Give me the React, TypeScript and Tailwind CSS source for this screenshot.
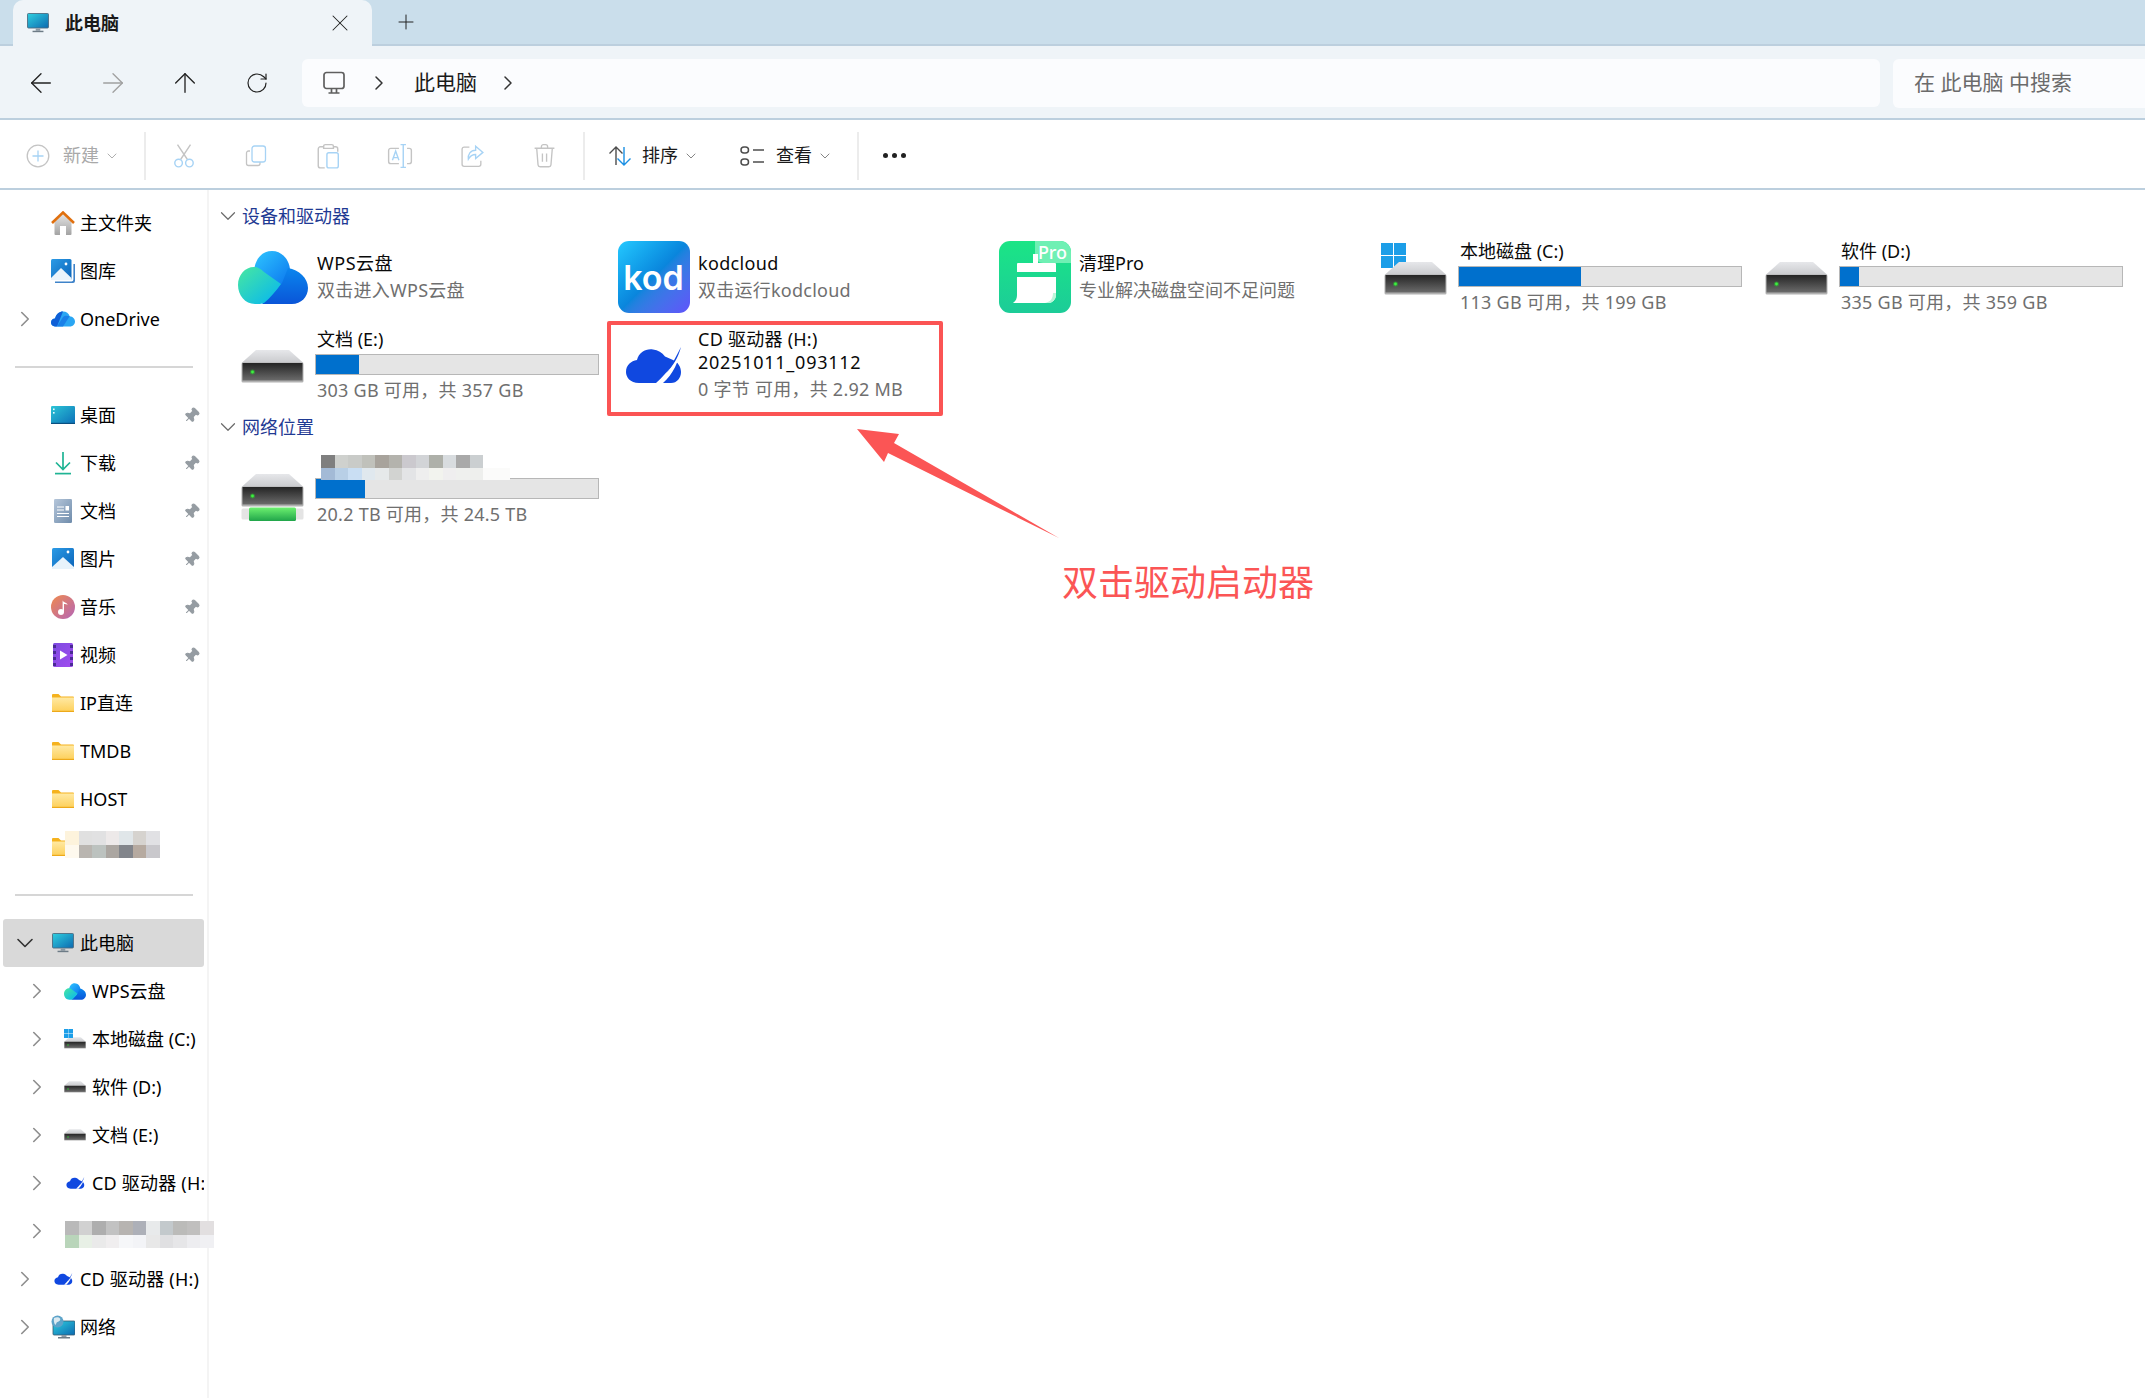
import { ArrowLeft, ArrowRight, ArrowUp, ChevronDown, ChevronRight, Pin, Plus, RotateCw, X } from 'lucide-react';
import type { ReactNode } from 'react';

type IconProps = { className?: string };

function MonitorIcon({ className }: IconProps) {
  return (
    <svg viewBox="0 0 24 22" className={className}>
      <defs>
        <linearGradient id="mon" x1="0" y1="0" x2="1" y2="1">
          <stop offset="0" stopColor="#2fd0e0" />
          <stop offset="1" stopColor="#0c69b0" />
        </linearGradient>
      </defs>
      <rect x="0.5" y="0.5" width="23" height="16" rx="1" fill="url(#mon)" stroke="#4c6b80" />
      <rect x="9.5" y="17" width="5" height="2.5" fill="#8b98a3" />
      <rect x="6" y="19.5" width="12" height="1.6" fill="#6d7b86" />
    </svg>
  );
}

function HomeIcon({ className }: IconProps) {
  return (
    <svg viewBox="0 0 24 24" className={className}>
      <defs>
        <linearGradient id="hm" x1="0" y1="0" x2="0" y2="1">
          <stop offset="0" stopColor="#e4e4e4" />
          <stop offset="1" stopColor="#a3a3a3" />
        </linearGradient>
      </defs>
      <path d="M3.5 11 12 3l8.5 8v12a1 1 0 0 1-1 1h-15a1 1 0 0 1-1-1z" fill="url(#hm)" />
      <rect x="9" y="15" width="6" height="9" fill="#fff" />
      <path d="M1 12 12 1.5 23 12" fill="none" stroke="#e0700f" strokeWidth="2.6" />
    </svg>
  );
}

function PictureIcon({ className, stacked }: IconProps & { stacked?: boolean }) {
  return (
    <svg viewBox="0 0 24 24" className={className}>
      <defs>
        <linearGradient id="pic" x1="0" y1="0" x2="1" y2="1">
          <stop offset="0" stopColor="#2c9be6" />
          <stop offset="1" stopColor="#0a63b8" />
        </linearGradient>
      </defs>
      {stacked && <path d="M4 24h18a2 2 0 0 0 2-2V5h-1.6v15.5a2 2 0 0 1-2 2H4z" fill="#3f83c9" />}
      <rect x={stacked ? 0 : 1} y={stacked ? 0 : 1} width={stacked ? 20.5 : 22} height={21} rx="1.5" fill="url(#pic)" />
      <path d={stacked ? 'M0 19 10 9l10.5 10v2H0z' : 'M1 20 12 10l11 10v2H1z'} fill="#e8f3fb" />
      <circle cx={stacked ? 15 : 17} cy="5" r="1.4" fill="#fff" />
    </svg>
  );
}

function OneDriveIcon({ className }: IconProps) {
  return (
    <svg viewBox="0 0 24 16" className={className}>
      <path d="M4 15.5C1.5 15.5 0 13.6 0 11.6 0 9.2 2 7.6 4 7.6 5.2 3 8.5 0.5 12 0.5c3.4 0 5.7 2 6.7 4.8 3 .2 5.3 2.6 5.3 5.2 0 2.8-2.2 5-5 5z" fill="#2aa6f3" />
      <path d="M4 15.5C1.5 15.5 0 13.6 0 11.6 0 9.2 2 7.6 4 7.6 5.2 3 8.5 0.5 12 0.5L6 15.5z" fill="#0f5fd6" />
      <path d="M6 15.5 12 6c1.4-1.6 4-1.5 6.7-.7L12 15.5z" fill="#1a80e8" />
    </svg>
  );
}

function DesktopIcon({ className }: IconProps) {
  return (
    <svg viewBox="0 0 24 18" className={className}>
      <defs>
        <linearGradient id="dsk" x1="0" y1="0" x2="1" y2="1">
          <stop offset="0" stopColor="#2cc5d6" />
          <stop offset="1" stopColor="#0c6fb8" />
        </linearGradient>
      </defs>
      <rect width="24" height="18" rx="1.2" fill="url(#dsk)" />
      <rect y="16.8" width="24" height="1.2" fill="#0a4f80" />
      <rect x="2" y="2.5" width="1.6" height="1.6" fill="#e8fbff" />
      <rect x="2" y="6" width="1.6" height="1.6" fill="#e8fbff" />
    </svg>
  );
}

function DownloadIcon({ className }: IconProps) {
  return (
    <svg viewBox="0 0 24 24" className={className} fill="none" stroke="#1fb494" strokeWidth="1.7">
      <path d="M12 1v17M5 11.5l7 7 7-7" />
      <path d="M4 22.6h16" />
    </svg>
  );
}

function DocIcon({ className }: IconProps) {
  return (
    <svg viewBox="0 0 20 24" className={className}>
      <defs>
        <linearGradient id="doc" x1="0" y1="0" x2="1" y2="1">
          <stop offset="0" stopColor="#b5c6da" />
          <stop offset="1" stopColor="#6f8cab" />
        </linearGradient>
      </defs>
      <rect x="1" width="18" height="24" rx="1.2" fill="url(#doc)" />
      <path d="M4 8h7M4 11h7M4 14.5h12M4 17.5h12" stroke="#fff" strokeWidth="1" />
      <rect x="12.5" y="7" width="3.5" height="4.5" fill="#fff" />
    </svg>
  );
}

function MusicIcon({ className }: IconProps) {
  return (
    <svg viewBox="0 0 24 24" className={className}>
      <defs>
        <linearGradient id="mus" x1="0" y1="0" x2="1" y2="1">
          <stop offset="0" stopColor="#f08a4d" />
          <stop offset="1" stopColor="#b465b8" />
        </linearGradient>
      </defs>
      <circle cx="12" cy="12" r="12" fill="url(#mus)" />
      <circle cx="10" cy="17" r="3" fill="#fff" />
      <path d="M11.6 17V5.5c1.5 2.4 4.4 2.2 5 4.2-1.6-.8-3-.8-3.6-.6V17z" fill="#fff" />
    </svg>
  );
}

function VideoIcon({ className }: IconProps) {
  return (
    <svg viewBox="0 0 20 24" className={className}>
      <defs>
        <linearGradient id="vid" x1="0" y1="0" x2="1" y2="1">
          <stop offset="0" stopColor="#7c4be0" />
          <stop offset="1" stopColor="#a24cef" />
        </linearGradient>
      </defs>
      <rect width="20" height="24" rx="1.5" fill="url(#vid)" />
      <path d="M0 2h3v3H0zM0 8h3v3H0zM0 14h3v3H0zM0 20h3v3H0zM17 2h3v3h-3zM17 8h3v3h-3zM17 14h3v3h-3zM17 20h3v3h-3z" fill="#4a2a96" />
      <path d="M7 7.5 14.5 12 7 16.5z" fill="#fff" />
    </svg>
  );
}

function FolderIcon({ className }: IconProps) {
  return (
    <svg viewBox="0 0 22 18" className={className}>
      <defs>
        <linearGradient id="fld" x1="0" y1="0" x2="0" y2="1">
          <stop offset="0" stopColor="#ffe9a3" />
          <stop offset="1" stopColor="#fdcf58" />
        </linearGradient>
      </defs>
      <path d="M0 1a1 1 0 0 1 1-1h5.5L9 2.5h12a1 1 0 0 1 1 1V6H0z" fill="#f5b21e" />
      <rect y="3.5" width="22" height="14.5" fill="url(#fld)" />
      <rect y="16.8" width="22" height="1.2" fill="#eda91a" />
    </svg>
  );
}

function WpsCloud({ className }: IconProps) {
  return (
    <svg viewBox="0 0 70 53" className={className}>
      <defs>
        <linearGradient id="wpsA" x1="0" y1="0" x2="1" y2="1">
          <stop offset="0" stopColor="#2fc6ff" />
          <stop offset="1" stopColor="#0a74ee" />
        </linearGradient>
        <linearGradient id="wpsB" x1="0" y1="0" x2="0" y2="1">
          <stop offset="0" stopColor="#0a86ee" />
          <stop offset="1" stopColor="#0a55d8" />
        </linearGradient>
        <linearGradient id="wpsC" x1="0" y1="0" x2="1" y2="1">
          <stop offset="0" stopColor="#48e8a0" />
          <stop offset="1" stopColor="#03b4f4" />
        </linearGradient>
      </defs>
      <path d="M16 20C17 8 24 0 34 0c10 0 18 9 18 20v16H16z" fill="url(#wpsA)" />
      <path d="M50 17c11 2 20 10 20 20 0 9-7 16-16 16H24L44 32z" fill="url(#wpsB)" />
      <path d="M16 16C20 16 23 18 26 21L43 33C38 40 32 47 26 52 24 53 20 53 17 53 7 53 0 44 0 34 0 24 7 16 16 16z" fill="url(#wpsC)" />
    </svg>
  );
}

function CdCloud({ className }: IconProps) {
  return (
    <svg viewBox="0 0 56 37" className={className}>
      <path d="M13 36C4 36 0 30 0 25c0-7 5-11 11-12C13 5 20 1.5 27 2.5c5 .7 9 3 12 7L47 13c5 2 8 7 8 12 0 6-4 11-10 11z" fill="#1048e0" />
      <path d="M55 0C50 15 42 25 30 36h7C47 27 53 15 55 0z" fill="#fff" />
      <path d="M55 0C52 11 47 19 40 26c5-7 10-16 15-26z" fill="#1048e0" />
    </svg>
  );
}

function DriveIcon({ className, withBar }: IconProps & { withBar?: boolean }) {
  return (
    <svg viewBox={withBar ? '0 0 63 47' : '0 0 63 33'} className={className}>
      <defs>
        <linearGradient id="drvT" x1="0" y1="0" x2="0" y2="1">
          <stop offset="0" stopColor="#e6e7ea" />
          <stop offset="1" stopColor="#c9cacd" />
        </linearGradient>
        <linearGradient id="drvF" x1="0" y1="0" x2="0" y2="1">
          <stop offset="0" stopColor="#242424" />
          <stop offset="1" stopColor="#6b6b6b" />
        </linearGradient>
        <linearGradient id="drvG" x1="0" y1="0" x2="0" y2="1">
          <stop offset="0" stopColor="#6cf06f" />
          <stop offset="1" stopColor="#20a54a" />
        </linearGradient>
      </defs>
      <path d="M15 0h33l14.5 13H.5z" fill="url(#drvT)" />
      <rect x="0.5" y="12.5" width="62" height="20" rx="1.5" fill="#b1b1b1" />
      <rect x="1.5" y="13" width="60" height="17.5" fill="url(#drvF)" />
      <circle cx="11.5" cy="22" r="2.5" fill="#22e02a" opacity="0.4" />
      <circle cx="11.5" cy="22" r="1.4" fill="#3cf23e" />
      {withBar && (
        <>
          <rect x="0.5" y="34.5" width="62" height="11" rx="1.5" fill="#e4e4e4" />
          <rect x="8" y="33.5" width="47" height="13.5" rx="1.5" fill="url(#drvG)" />
        </>
      )}
    </svg>
  );
}

function WinLogo({ className }: IconProps) {
  return (
    <svg viewBox="0 0 25 25" className={className}>
      <path d="M0 0h12v12H0zM13 0h12v12H13zM0 13h12v12H0zM13 13h12v12H13z" fill="#1c9ee8" />
    </svg>
  );
}

function NetworkIcon({ className }: IconProps) {
  return (
    <svg viewBox="0 0 24 24" className={className}>
      <rect x="2" y="6" width="22" height="14" rx="1" fill="url(#mon)" stroke="#3a5c70" strokeWidth="0.8" />
      <rect x="10.5" y="20" width="5" height="2" fill="#8b98a3" />
      <rect x="7" y="22" width="12" height="1.5" fill="#6d7b86" />
      <circle cx="6.5" cy="6.5" r="6" fill="#5da3c9" />
      <path d="M3 3c2-1 5-1 6 .5s-1 3-2.5 3.5S5 11 4 9.5 2.5 5 3 3z" fill="#dbe9f0" />
    </svg>
  );
}

function Mosaic({ rows, cell }: { rows: string[][]; cell: string }) {
  return (
    <div className="flex flex-col">
      {rows.map((row, i) => (
        <div key={i} className="flex">
          {row.map((c, j) => (
            <div key={j} className={`${cell} ${c}`} />
          ))}
        </div>
      ))}
    </div>
  );
}

function NavRow({
  label,
  icon,
  level = 0,
  expand,
  pinned,
  selected,
}: {
  label?: ReactNode;
  icon?: ReactNode;
  level?: number;
  expand?: 'open' | 'closed';
  pinned?: boolean;
  selected?: boolean;
}) {
  return (
    <div
      className={`mx-[3px] flex h-[48px] w-[201px] items-center rounded-[3px] text-[18px] text-black ${selected ? 'bg-[#d9d9d9]' : ''} ${level === 1 ? 'pl-[25px]' : 'pl-[13px]'}`}
    >
      <span className="flex w-[18px] shrink-0 justify-center">
        {expand === 'closed' && <ChevronRight size={26} strokeWidth={1.5} className="shrink-0 text-[#8e8e8e]" />}
        {expand === 'open' && <ChevronDown size={28} strokeWidth={1.4} className="shrink-0 text-[#333333]" />}
      </span>
      <span className="ml-[17px] flex w-[24px] shrink-0 items-center justify-center">{icon}</span>
      <span className="ml-[5px] min-w-0 flex-1 overflow-hidden whitespace-nowrap">{label}</span>
      {pinned && <Pin size={17} strokeWidth={1.5} className="mr-[4px] shrink-0 rotate-45 fill-[#959ca2] text-[#959ca2]" />}
    </div>
  );
}

function Sidebar() {
  const driveMini = <DriveIcon className="h-[12px] w-[22px]" />;
  const cdMini = <CdCloud className="h-[12px] w-[19px]" />;
  const cdLabel = <span className="tracking-[0.2px]">CD 驱动器 (H:)</span>;
  return (
    <aside className="relative w-[209px] shrink-0 border-r-2 border-[#f4f4f4] pt-[9px]">
      <NavRow label="主文件夹" icon={<HomeIcon className="h-[24px] w-[24px]" />} />
      <NavRow label="图库" icon={<PictureIcon stacked className="h-[24px] w-[24px]" />} />
      <NavRow label="OneDrive" expand="closed" icon={<OneDriveIcon className="h-[16px] w-[24px]" />} />
      <div className="ml-[15px] mt-[23px] h-[2px] w-[178px] bg-[#d6d6d6]" />
      <div className="mt-[23px]">
        <NavRow label="桌面" pinned icon={<DesktopIcon className="h-[18px] w-[24px]" />} />
        <NavRow label="下载" pinned icon={<DownloadIcon className="h-[24px] w-[24px]" />} />
        <NavRow label="文档" pinned icon={<DocIcon className="h-[24px] w-[20px]" />} />
        <NavRow label="图片" pinned icon={<PictureIcon className="h-[24px] w-[24px]" />} />
        <NavRow label="音乐" pinned icon={<MusicIcon className="h-[24px] w-[24px]" />} />
        <NavRow label="视频" pinned icon={<VideoIcon className="h-[24px] w-[20px]" />} />
        <NavRow label="IP直连" icon={<FolderIcon className="h-[18px] w-[22px]" />} />
        <NavRow label="TMDB" icon={<FolderIcon className="h-[18px] w-[22px]" />} />
        <NavRow label="HOST" icon={<FolderIcon className="h-[18px] w-[22px]" />} />
        <NavRow icon={<FolderIcon className="h-[18px] w-[22px]" />} />
      </div>
      <div className="ml-[15px] mt-[23px] h-[2px] w-[178px] bg-[#d6d6d6]" />
      <div className="mt-[23px]">
        <NavRow label="此电脑" selected expand="open" icon={<MonitorIcon className="h-[20px] w-[24px]" />} />
        <NavRow label="WPS云盘" level={1} expand="closed" icon={<WpsCloud className="h-[17px] w-[22px]" />} />
        <NavRow
          label="本地磁盘 (C:)"
          level={1}
          expand="closed"
          icon={
            <span className="relative flex h-[20px] w-[22px] items-end">
              {driveMini}
              <WinLogo className="absolute left-0 top-0 h-[9px] w-[9px]" />
            </span>
          }
        />
        <NavRow label="软件 (D:)" level={1} expand="closed" icon={driveMini} />
        <NavRow label="文档 (E:)" level={1} expand="closed" icon={driveMini} />
        <NavRow label={cdLabel} level={1} expand="closed" icon={cdMini} />
        <NavRow level={1} expand="closed" />
        <NavRow label={cdLabel} expand="closed" icon={cdMini} />
        <NavRow label="网络" expand="closed" icon={<NetworkIcon className="h-[24px] w-[24px]" />} />
      </div>
      <div className="absolute left-[65px] top-[641px]">
        <Mosaic
          cell="h-[13.5px] w-[13.5px]"
          rows={[
            ['bg-[#fdf3dc]', 'bg-[#e0e0e0]', 'bg-[#e1e1e2]', 'bg-[#ede9e9]', 'bg-[#e0e6e9]', 'bg-[#d6d3cf]', 'bg-[#e1e1e4]'],
            ['bg-[#fef9ee]', 'bg-[#b9b5b0]', 'bg-[#bcc2bf]', 'bg-[#aba6a1]', 'bg-[#82858b]', 'bg-[#b6aaa0]', 'bg-[#c9c8cc]'],
          ]}
        />
      </div>
      <div className="absolute left-[65px] top-[1031px]">
        <Mosaic
          cell="h-[13.5px] w-[13.5px]"
          rows={[
            ['bg-[#b9b9b9]', 'bg-[#d1d1d1]', 'bg-[#aeaeae]', 'bg-[#c2c2c2]', 'bg-[#b7b4b1]', 'bg-[#adb0b8]', 'bg-[#e8eaeb]', 'bg-[#c3c9cc]', 'bg-[#bbbbb9]', 'bg-[#c0bfbe]', 'bg-[#e2dfe0]'],
            ['bg-[#b9d5ba]', 'bg-[#e8f0e6]', 'bg-[#eaeaea]', 'bg-[#f0eeef]', 'bg-[#f6f7f9]', 'bg-[#f3f4f7]', 'bg-[#e8e8e8]', 'bg-[#e0e0e2]', 'bg-[#e6e6e8]', 'bg-[#ededf0]', 'bg-[#f0f0f3]'],
          ]}
        />
      </div>
    </aside>
  );
}

function Tile({ icon, children }: { icon: ReactNode; children: ReactNode }) {
  return (
    <div className="flex h-[72px]">
      <div className="flex w-[89px] shrink-0 items-center justify-center">{icon}</div>
      <div className="flex flex-col text-[18px] leading-[22px]">{children}</div>
    </div>
  );
}

function AppTile({ icon, title, sub, titleClass = '', subClass = '' }: { icon: ReactNode; title: string; sub: string; titleClass?: string; subClass?: string }) {
  return (
    <Tile icon={icon}>
      <div className={`mt-[11px] text-[#0a0a0a] ${titleClass}`}>{title}</div>
      <div className={`mt-[5px] text-[#6f6f6f] ${subClass}`}>{sub}</div>
    </Tile>
  );
}

function DriveTile({ icon, title, free, total, unit }: { icon: ReactNode; title: ReactNode; free: number; total: number; unit: string }) {
  const used = ((total - free) / total) * 100;
  return (
    <Tile icon={icon}>
      <div className="-mt-px h-[22px] text-[#0a0a0a]">{title}</div>
      <div className="-ml-[2px] mt-[4px] h-[22px] w-[284px] border border-[#b7b7b7] bg-[#e5e5e5]">
        <div className="h-full bg-[#0070cd]" style={{ width: `${used}%` }} />
      </div>
      <div className="mt-[4px] tracking-[0.25px] text-[#6f6f6f]">{`${free} ${unit} 可用，共 ${total} ${unit}`}</div>
    </Tile>
  );
}

function SectionHeader({ label }: { label: string }) {
  return (
    <div className="flex h-[24px] items-center text-[18px] text-[#1f3a93]">
      <ChevronDown size={26} strokeWidth={1.1} className="-ml-[13px] shrink-0 text-[#6a6a6a]" />
      <span className="ml-px">{label}</span>
    </div>
  );
}

function KodIcon() {
  return (
    <div className="flex h-[72px] w-[72px] items-center justify-center rounded-[11px] bg-gradient-to-br from-[#25c9ff] via-[#0a85dc] to-[#5f52fb] pt-[1px] font-['Inter',sans-serif] text-[34px] font-semibold text-white">
      kod
    </div>
  );
}

function CleanProIcon() {
  return (
    <div className="relative h-[72px] w-[72px] overflow-hidden rounded-[11px] bg-gradient-to-b from-[#1be585] to-[#1ccc98]">
      <div className="absolute right-0 top-0 flex h-[22px] w-[36px] items-center justify-center rounded-bl-[8px] bg-[#6ff0b4] text-[18px] font-medium leading-none text-white">Pro</div>
      <svg viewBox="0 0 72 72" className="absolute inset-0 h-full w-full">
        <path d="M34 13h5v9h17a1 1 0 0 1 1 1v8H18v-8a1 1 0 0 1 1-1h15z" fill="#fff" />
        <path d="M18 36h39v18a8 8 0 0 1-8 8H14c3-2 4-5 4-8z" fill="#fff" />
        <path d="M46 62c5-1 8-4 8-10h3v2a8 8 0 0 1-8 8z" fill="#bdf5da" />
      </svg>
    </div>
  );
}

function ToolIcon({ children }: { children: ReactNode }) {
  return <div className="flex h-[30px] w-[72px] items-center justify-center">{children}</div>;
}

function Separator() {
  return <div className="h-[48px] w-[2px] shrink-0 bg-[#ececec]" />;
}

function Toolbar() {
  const gray = '#c4c4c4';
  const blue = '#a7d3f5';
  return (
    <div className="flex h-[70px] items-center border-b-2 border-[#bccfde] bg-white pl-[26px] pt-[3px] text-[18px]">
      <div className="flex w-[118px] items-center text-[#a9a9a9]">
        <svg viewBox="0 0 24 24" className="h-[24px] w-[24px]" fill="none" strokeWidth="1.3">
          <circle cx="12" cy="12" r="10.8" stroke={gray} />
          <path d="M12 6.5v11M6.5 12h11" stroke={blue} />
        </svg>
        <span className="ml-[13px]">新建</span>
        <ChevronDown size={16} strokeWidth={1.2} className="ml-[5px] text-[#9a9a9a]" />
      </div>
      <Separator />
      <div className="ml-[2px] flex">
        <ToolIcon>
          <svg viewBox="0 0 24 24" className="h-[26px] w-[26px]" fill="none" strokeWidth="1.3">
            <path d="M6 1.5 15 15M18 1.5 9 15" stroke={gray} />
            <circle cx="7" cy="18.5" r="3.5" stroke={blue} />
            <circle cx="17" cy="18.5" r="3.5" stroke={blue} />
          </svg>
        </ToolIcon>
        <ToolIcon>
          <svg viewBox="0 0 24 24" className="h-[24px] w-[24px]" fill="none" strokeWidth="1.3">
            <path d="M6 7H4.500a2 2 0 0 0-2 2v10.500a2 2 0 0 0 2 2H14a2 2 0 0 0 2-2V18" stroke={gray} />
            <rect x="8" y="2" width="13.5" height="16" rx="2.5" stroke={blue} />
          </svg>
        </ToolIcon>
        <ToolIcon>
          <svg viewBox="0 0 24 24" className="h-[26px] w-[26px]" fill="none" strokeWidth="1.3">
            <path d="M8 3.5H5a2 2 0 0 0-2 2V21a2 2 0 0 0 2 2h4M17 3.5h2a2 2 0 0 1 2 2V8M8 5V3a1.5 1.5 0 0 1 1.5-1.5h6A1.5 1.5 0 0 1 17 3v2z" stroke={gray} />
            <rect x="11" y="9" width="10.5" height="14" rx="1.8" stroke={blue} />
          </svg>
        </ToolIcon>
        <ToolIcon>
          <svg viewBox="0 0 24 24" className="h-[26px] w-[26px]" fill="none" strokeWidth="1.3">
            <path d="M11 5H3.500a2 2 0 0 0-2 2v10a2 2 0 0 0 2 2H11M18.500 5h2a2 2 0 0 1 2 2v10a2 2 0 0 1-2 2h-2" stroke={gray} />
            <path d="M15 1.500v21M12.500 1.500h5M12.500 22.500h5M5 16l3-8.500 3 8.500M6 13.500h4" stroke={blue} />
          </svg>
        </ToolIcon>
        <ToolIcon>
          <svg viewBox="0 0 24 24" className="h-[25px] w-[25px]" fill="none" strokeWidth="1.3">
            <path d="M9 4H4a2 2 0 0 0-2 2v14.500a2 2 0 0 0 2 2h14a2 2 0 0 0 2-2V17" stroke={gray} />
            <path d="M15 3v4C10 7 7.500 11 8 15.500c2-3.500 4-4.500 7-4.500v4l7-6z" stroke={blue} />
          </svg>
        </ToolIcon>
        <ToolIcon>
          <svg viewBox="0 0 24 24" className="h-[25px] w-[25px]" fill="none" stroke={gray} strokeWidth="1.3">
            <path d="M2.500 5h19M4.500 5l1.300 16a2 2 0 0 0 2 1.800h8.400a2 2 0 0 0 2-1.800L19.500 5M9 5V3.500A2 2 0 0 1 11 1.500h2a2 2 0 0 1 2 2V5M10 10v8M14 10v8" />
          </svg>
        </ToolIcon>
      </div>
      <div className="ml-[3px]">
        <Separator />
      </div>
      <div className="ml-[23px] flex items-center text-[#1a1a1a]">
        <svg viewBox="0 0 24 24" className="h-[24px] w-[24px]" fill="none" strokeWidth="1.4">
          <path d="M8 21V3M1.500 9.500 8 3l6.500 6.500" stroke="#4d4d4d" />
          <path d="M16 3v18M9.500 14.500 16 21l6.500-6.500" stroke="#1a8fe3" />
        </svg>
        <span className="ml-[10px]">排序</span>
        <ChevronDown size={16} strokeWidth={1.2} className="ml-[5px] text-[#666666]" />
        <svg viewBox="0 0 24 24" className="ml-[41px] h-[24px] w-[24px]" fill="none" stroke="#4d4d4d" strokeWidth="1.5">
          <rect x="1" y="3" width="7.5" height="6" rx="3" />
          <rect x="1" y="15" width="7.5" height="6" rx="3" />
          <path d="M13 6h11M13 18h11" />
        </svg>
        <span className="ml-[12px]">查看</span>
        <ChevronDown size={16} strokeWidth={1.2} className="ml-[5px] text-[#666666]" />
      </div>
      <div className="ml-[24px]">
        <Separator />
      </div>
      <div className="ml-[24px] flex gap-[4px]">
        <div className="h-[5px] w-[5px] rounded-full bg-[#222222]" />
        <div className="h-[5px] w-[5px] rounded-full bg-[#222222]" />
        <div className="h-[5px] w-[5px] rounded-full bg-[#222222]" />
      </div>
    </div>
  );
}

export default function App() {
  return (
    <div className="relative flex h-[1398px] w-[2145px] flex-col overflow-hidden bg-white font-['Noto_Sans','Noto_Sans_CJK_SC',sans-serif]">
      <div className="flex h-[46px] shrink-0 items-stretch border-b-2 border-[#bccfde] bg-[#cadeeb] pl-[13px]">
        <div className="-mb-[2px] flex w-[359px] items-center rounded-t-[10px] bg-[#eff4f8] pl-[13px]">
          <MonitorIcon className="h-[20px] w-[24px]" />
          <span className="ml-[15px] text-[18px] font-semibold text-[#1a1a1a]">此电脑</span>
          <X size={28} strokeWidth={0.9} className="ml-[207px] shrink-0 text-[#222222]" />
        </div>
        <div className="ml-[22px] flex items-center">
          <Plus size={24} strokeWidth={1} className="text-[#222222]" />
        </div>
      </div>
      <div className="flex h-[74px] shrink-0 items-center border-b-2 border-[#bccfde] bg-[#eff4f8] pl-[5px] pt-[2px]">
        <div className="flex w-[72px] justify-center"><ArrowLeft size={32} strokeWidth={1} className="text-[#222222]" /></div>
        <div className="flex w-[72px] justify-center"><ArrowRight size={32} strokeWidth={1} className="text-[#a0a0a0]" /></div>
        <div className="flex w-[72px] justify-center"><ArrowUp size={32} strokeWidth={1} className="text-[#222222]" /></div>
        <div className="flex w-[72px] justify-center"><RotateCw size={24} strokeWidth={1.2} className="text-[#222222]" /></div>
        <div className="ml-[9px] flex h-[48px] flex-1 items-center rounded-[6px] bg-[#fbfcfe] pl-[20px] text-[21px] text-[#1a1a1a]">
          <svg viewBox="0 0 24 24" className="h-[24px] w-[24px]" fill="none" stroke="#5f5f5f" strokeWidth="1.7">
            <rect x="2" y="1.5" width="20" height="16" rx="2.5" />
            <path d="M9.5 18v3.5M14.5 18v3.5M6.5 22h11" />
          </svg>
          <ChevronRight size={24} strokeWidth={1.5} className="ml-[21px] shrink-0 text-[#333333]" />
          <span className="ml-[23px]">此电脑</span>
          <ChevronRight size={24} strokeWidth={1.5} className="ml-[19px] shrink-0 text-[#333333]" />
        </div>
        <div className="ml-[13px] flex h-[49px] w-[252px] items-center rounded-l-[6px] bg-[#fbfcfe] pl-[21px] text-[21px] text-[#6b6b6b]">
          在 此电脑 中搜索
        </div>
      </div>
      <Toolbar />
      <div className="flex min-h-0 flex-1">
        <Sidebar />
        <main className="flex-1 pl-[19px] pt-[14px]">
          <SectionHeader label="设备和驱动器" />
          <div className="mt-[13px] grid grid-cols-[repeat(5,381px)] gap-y-[16px]">
            <AppTile icon={<WpsCloud className="h-[53px] w-[70px]" />} title="WPS云盘" sub="双击进入WPS云盘" titleClass="tracking-[0.5px]" subClass="tracking-[0.25px]" />
            <AppTile icon={<KodIcon />} title="kodcloud" sub="双击运行kodcloud" titleClass="tracking-[0.35px]" subClass="tracking-[0.25px]" />
            <AppTile icon={<CleanProIcon />} title="清理Pro" sub="专业解决磁盘空间不足问题" />
            <DriveTile
              icon={
                <div className="relative h-[72px] w-[63px] shrink-0">
                  <WinLogo className="absolute -left-[3px] top-[2px] h-[25px] w-[25px]" />
                  <DriveIcon className="absolute left-0 top-[21px] h-[33px] w-[63px]" />
                </div>
              }
              title="本地磁盘 (C:)"
              free={113}
              total={199}
              unit="GB"
            />
            <DriveTile icon={<DriveIcon className="mt-[3px] h-[33px] w-[63px]" />} title="软件 (D:)" free={335} total={359} unit="GB" />
            <DriveTile icon={<DriveIcon className="mt-[3px] h-[33px] w-[63px]" />} title="文档 (E:)" free={303} total={357} unit="GB" />
            <div className="relative">
              <Tile icon={<CdCloud className="h-[37px] w-[56px]" />}>
                <div className="-mt-px tracking-[0.25px] text-[#0a0a0a]">CD 驱动器 (H:)</div>
                <div className="mt-px tracking-[0.75px] text-[#0a0a0a]">20251011_093112</div>
                <div className="mt-[5px] tracking-[0.25px] text-[#6f6f6f]">0 字节 可用，共 2.92 MB</div>
              </Tile>
              <div className="absolute -left-[2px] -top-[8px] h-[95px] w-[336px] rounded-[2px] border-[4px] border-[#fb5454]" />
            </div>
          </div>
          <div className="mt-[14px]">
            <SectionHeader label="网络位置" />
          </div>
          <div className="mt-[14px] grid grid-cols-[repeat(5,381px)]">
            <div className="relative">
              <DriveTile
                icon={<DriveIcon withBar className="mt-[17px] h-[47px] w-[63px]" />}
                title={<span className="invisible">NAS</span>}
                free={20.2}
                total={24.5}
                unit="TB"
              />
              <div className="absolute left-[93px] top-[2px]">
                <Mosaic
                  cell="h-[12.5px] w-[13.5px]"
                  rows={[
                    ['bg-[#7f7f7f]', 'bg-[#cfd1ce]', 'bg-[#c9cbc8]', 'bg-[#c0c1bb]', 'bg-[#a8a39c]', 'bg-[#b4b3ad]', 'bg-[#cbc9ce]', 'bg-[#d2d4d7]', 'bg-[#aeb0a9]', 'bg-[#d8dcdf]', 'bg-[#a9a9a9]', 'bg-[#cbcfd1]'],
                    ['bg-[#a3bad6]', 'bg-[#b8cfe6]', 'bg-[#c9def3]', 'bg-[#e0e8ee]', 'bg-[#e6e9ea]', 'bg-[#d2d3d1]', 'bg-[#e3e4e6]', 'bg-[#eeeeee]', 'bg-[#f2f3ee]', 'bg-[#efeeef]', 'bg-[#eff0ee]', 'bg-[#eeefed]', 'bg-[#fbfbfa]', 'bg-[#fbfbfa]'],
                  ]}
                />
              </div>
            </div>
          </div>
        </main>
      </div>
      <svg viewBox="0 0 210 115" className="absolute left-[855px] top-[427px] h-[115px] w-[210px]">
        <path d="M2 2 44 7 39 16 204 111 33 26 29 35z" fill="#fb5555" />
      </svg>
      <div className="absolute left-[1062px] top-[562px] text-[36px] leading-[42px] text-[#fb5555]">双击驱动启动器</div>
    </div>
  );
}
